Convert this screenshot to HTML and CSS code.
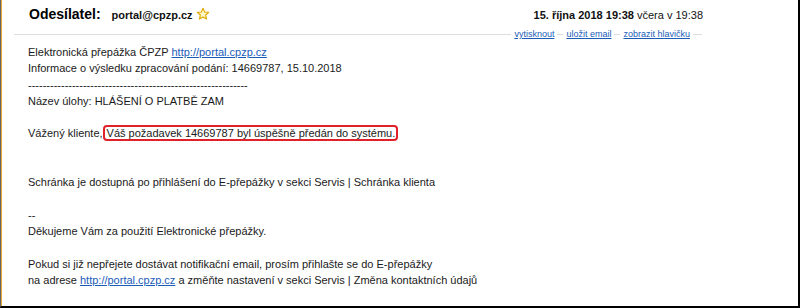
FILE: index.html
```html
<!DOCTYPE html>
<html>

<head>
    <meta name="viewport" content="width=device-width, initial-scale=1.0" />
    <title>Odesílatel: portal@cpzp.cz</title>
    <link rel="stylesheet" href="styles.css">
</head>

<body>
    <div class="frame">
        <div class="head">
            <div class="sender">
                <span class="label">Odesílatel:</span>
                <span class="from">portal@cpzp.cz</span>
                <svg class="star" width="14" height="14" viewBox="0 0 24 24">
                    <path d="M12 2.2l2.9 6.3 6.9.7-5.2 4.6 1.5 6.8L12 17.1l-6.1 3.5 1.5-6.8-5.2-4.6 6.9-.7z"
                        fill="#fff6c8" stroke="#e0a800" stroke-width="2" stroke-linejoin="round" />
                </svg>
            </div>
            <div class="date"><b>15. října 2018 19:38</b> včera v 19:38</div>
        </div>

        <div class="tools">
            <span class="rule long"></span>
            <a href="#">vytisknout</a>
            <span class="rule"></span>
            <a href="#">uložit email</a>
            <span class="rule"></span>
            <a href="#">zobrazit hlavičku</a>
            <span class="rule end"></span>
        </div>

        <div class="message">
            <p>Elektronická přepážka ČPZP <a href="#">http://portal.cpzp.cz</a><br>
                Informace o výsledku zpracování podání: 14669787, 15.10.2018<br>
                ------------------------------------------------------------<br>
                Název úlohy: HLÁŠENÍ O PLATBĚ ZAM</p>

            <p>Vážený kliente,<span class="mark">Váš požadavek 14669787 byl úspěšně předán do systému.</span></p>

            <p class="gap">Schránka je dostupná po přihlášení do E-přepážky v sekci Servis | Schránka klienta</p>

            <p>--<br>
                Děkujeme Vám za použití Elektronické přepážky.</p>

            <p>Pokud si již nepřejete dostávat notifikační email, prosím přihlašte se do E-přepážky<br>
                na adrese <a href="#">http://portal.cpzp.cz</a> a změňte nastavení v sekci Servis | Změna kontaktních údajů</p>
        </div>
    </div>
</body>

</html>
```

FILE: styles.css
```css
html, body {
    margin: 0;
    padding: 0;
    background: #fff;
}

body {
    font-family: "Liberation Sans", Arial, sans-serif;
    color: #111;
}

.frame {
    width: 800px;
    height: 308px;
    box-sizing: border-box;
    border-left: 1px solid #666;
    border-right: 2px solid #000;
    border-bottom: 2px solid #000;
    box-shadow: inset 1px 0 0 #e8a838;
    overflow: hidden;
}

.head {
    display: flex;
    justify-content: space-between;
    align-items: baseline;
    padding: 5px 95px 0 28px;
    height: 21px;
}

.sender {
    display: flex;
    align-items: baseline;
}

.label {
    font-size: 14px;
    font-weight: bold;
    color: #000;
}

.from {
    font-size: 11px;
    font-weight: bold;
    margin-left: 11px;
}

.star {
    margin-left: 3px;
    position: relative;
    top: 2px;
}

.date {
    font-size: 11px;
}

.tools {
    display: flex;
    align-items: center;
    padding: 0 96px 0 13px;
    height: 16px;
    font-size: 9px;
}

.tools a {
    color: #1a5cb8;
    margin: 0 3px;
}

.rule {
    width: 6px;
    border-top: 1px solid #ddd;
}

.rule.long {
    flex: 1;
}

.rule.end {
    width: 9px;
}

.message {
    padding: 2px 0 0 27px;
    font-size: 11px;
    line-height: 16.3px;
    color: #1a1a1a;
}

.message p {
    margin: 0 0 16.3px;
}

.message p.gap {
    margin-top: 32.6px;
}

.message a {
    color: #1a5cb8;
}

.mark {
    border: 2px solid #e0202a;
    border-radius: 4px;
    padding: 0 1px 0 2px;
}
```
